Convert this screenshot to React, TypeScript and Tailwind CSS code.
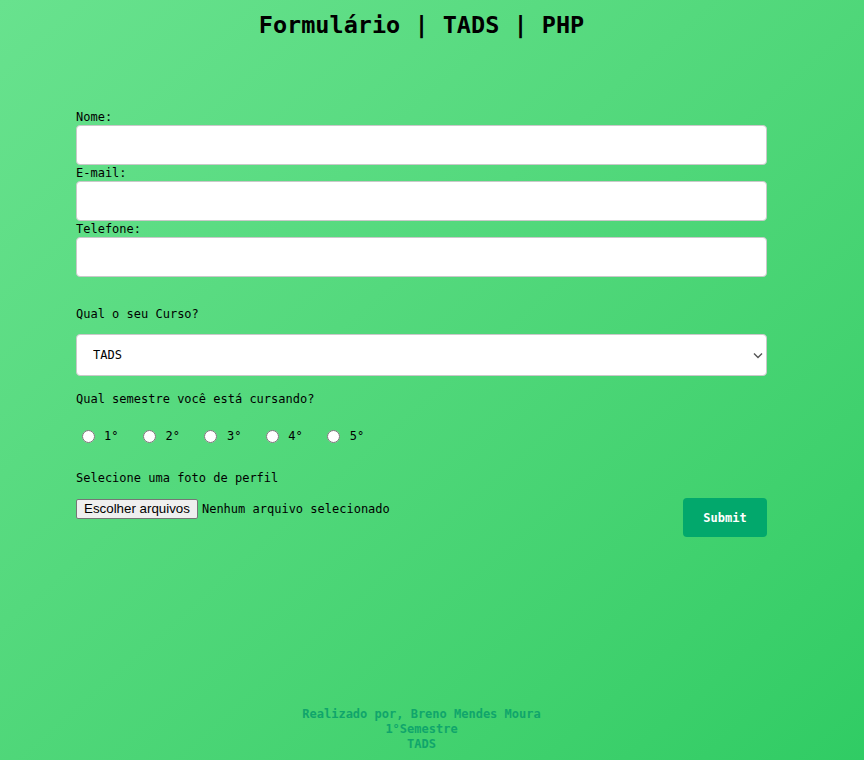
const MONO = 'font-["DejaVu_Sans_Mono",monospace]';

const FIELDS = ['Nome:', 'E-mail:', 'Telefone:'];
const SEMESTRES = ['1°', '2°', '3°', '4°', '5°'];

export default function App() {
  return (
    <div className={`h-[760px] w-full bg-gradient-to-br from-[#68e28e] to-[#30cc64] ${MONO} text-black`}>
      <div className="w-[843px] h-full flex flex-col">
        <h1 className="pt-[10px] text-center text-[23.5px] leading-[30px] font-bold">Formulário | TADS | PHP</h1>

        <form className="ml-[76px] w-[691px] mt-[69px] flex flex-col text-[12px]" onSubmit={(e) => e.preventDefault()}>
          {FIELDS.map((f) => (
            <div key={f} className="flex flex-col">
              <label className="h-[16px] leading-[16px]">{f}</label>
              <input type="text" className="h-[40px] w-full bg-white border border-[#c9c9c9] rounded-[4px] px-3 outline-none" />
            </div>
          ))}

          <p className="mt-[29px] leading-[16px]">Qual o seu Curso?</p>
          <div className="relative mt-[12px]">
            <select className="h-[42px] w-full appearance-none bg-white border border-[#c9c9c9] rounded-[4px] pl-[16px] text-[12px] text-black outline-none">
              <option>TADS</option>
            </select>
            <svg className="absolute right-[4px] top-[18px]" width="10" height="7" viewBox="0 0 10 7" fill="none">
              <path d="M1 1.5l4 4 4-4" stroke="#555" strokeWidth="1.4" />
            </svg>
          </div>

          <p className="mt-[15px] leading-[16px]">Qual semestre você está cursando?</p>
          <div className="mt-[21px] h-[16px] flex items-center gap-[19px]">
            {SEMESTRES.map((s) => (
              <label key={s} className="flex items-center">
                <input type="radio" name="semestre" className="ml-[5.5px] w-[13px] h-[13px] m-0" />
                <span className="ml-[9.5px]">{s}</span>
              </label>
            ))}
          </div>

          <p className="mt-[26px] leading-[16px]">Selecione uma foto de perfil</p>
          <div className="mt-[12px] flex items-start justify-between">
            <div className="mt-[1px] flex items-center">
              <span className='h-[20px] px-[7px] flex items-center bg-[#efefef] border border-[#767676] rounded-[2px] font-["Liberation_Sans",Arial,sans-serif] text-[13.33px] text-black'>
                Escolher arquivos
              </span>
              <span className="ml-[4px]">Nenhum arquivo selecionado</span>
            </div>
            <button type="submit" className="w-[84px] h-[39px] bg-[#02a86c] rounded-[4px] text-white font-bold text-[12px]">
              Submit
            </button>
          </div>
        </form>

        <footer className="mt-auto pb-[8px] text-center text-[12px] leading-[15px] font-bold text-[#10a56b]">
          <p>Realizado por, Breno Mendes Moura</p>
          <p>1°Semestre</p>
          <p>TADS</p>
        </footer>
      </div>
    </div>
  );
}
